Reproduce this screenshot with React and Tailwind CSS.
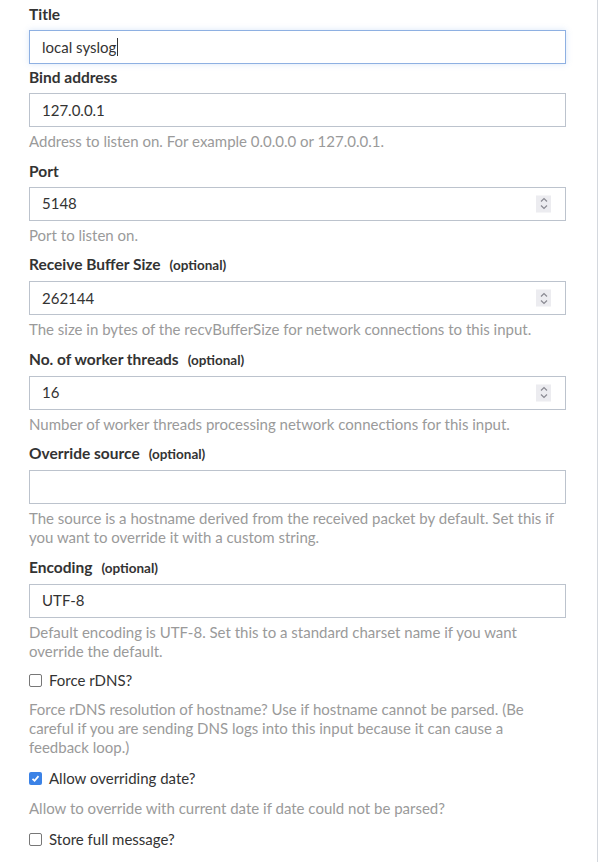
import React from 'react';

const FONT = { fontFamily: 'Lato, "Open Sans", sans-serif' };

function Label({ children, optional }) {
  return (
    <label className="block text-[15.5px] font-bold text-[#333] leading-[20px] mb-[6px]">
      {children}
      {optional && <span className="ml-[9px] text-[13.5px] font-bold">(optional)</span>}
    </label>
  );
}

function Help({ children }) {
  return <p className="mt-[5px] mb-[9.5px] text-[15px] leading-[19px] text-[#9a9a9a]">{children}</p>;
}

function Spinner() {
  return (
    <span className="absolute right-[15px] top-1/2 -translate-y-1/2 w-[15px] h-[17px] bg-[#ececf0] flex items-center justify-center">
      <svg width="10" height="14" viewBox="0 0 10 14" fill="none" stroke="#8a8a92" strokeWidth="1.2">
        <path d="M2 5 L5 2 L8 5" />
        <path d="M2 9 L5 12 L8 9" />
      </svg>
    </span>
  );
}

function Field({ label, optional, value, help, number, focused }) {
  return (
    <div className="mb-[3px]">
      <Label optional={optional}>{label}</Label>
      <div className="relative">
        <div
          className={
            'h-[34px] w-full border bg-white px-[12px] flex items-center text-[15px] text-[#333] ' +
            (focused ? 'border-[#8eb0e2] shadow-[0_0_6px_rgba(102,155,230,0.25)]' : 'border-[#bcc3cd]')
          }
        >
          {value}
          {focused && <span className="inline-block w-px h-[18px] bg-[#333] ml-px" />}
        </div>
        {number && <Spinner />}
      </div>
      {help && <Help>{help}</Help>}
    </div>
  );
}

function Check({ label, checked, help }) {
  return (
    <div className="mb-[11.5px]">
      <div className="flex items-center gap-[7px] h-[20px]">
        {checked ? (
          <span className="w-[13px] h-[13px] rounded-[2px] bg-[#3b82e6] flex items-center justify-center">
            <svg width="9" height="9" viewBox="0 0 9 9" fill="none" stroke="#fff" strokeWidth="1.8">
              <path d="M1.5 4.8 L3.6 6.8 L7.5 2.2" />
            </svg>
          </span>
        ) : (
          <span className="w-[13px] h-[13px] rounded-[2px] border border-[#777] bg-white" />
        )}
        <span className="text-[15px] text-[#333]">{label}</span>
      </div>
      {help && <p className="mt-[10px] text-[15px] leading-[19px] text-[#9a9a9a]">{help}</p>}
    </div>
  );
}

export default function App() {
  return (
    <div className="w-[598px] h-[862px] bg-white overflow-hidden" style={FONT}>
      <div className="w-[598px] border-r border-[#d4d8de] h-full pl-[29px] pr-[31px] pt-[4px]">
        <Field label="Title" value="local syslog" focused />
        <Field
          label="Bind address"
          value="127.0.0.1"
          help="Address to listen on. For example 0.0.0.0 or 127.0.0.1."
        />
        <Field label="Port" value="5148" number help="Port to listen on." />
        <Field
          label="Receive Buffer Size"
          optional
          value="262144"
          number
          help="The size in bytes of the recvBufferSize for network connections to this input."
        />
        <Field
          label="No. of worker threads"
          optional
          value="16"
          number
          help="Number of worker threads processing network connections for this input."
        />
        <Field
          label="Override source"
          optional
          value=""
          help="The source is a hostname derived from the received packet by default. Set this if you want to override it with a custom string."
        />
        <Field
          label="Encoding"
          optional
          value="UTF-8"
          help="Default encoding is UTF-8. Set this to a standard charset name if you want override the default."
        />
        <div className="mt-[2px]">
          <Check
            label="Force rDNS?"
            help="Force rDNS resolution of hostname? Use if hostname cannot be parsed. (Be careful if you are sending DNS logs into this input because it can cause a feedback loop.)"
          />
          <Check
            label="Allow overriding date?"
            checked
            help="Allow to override with current date if date could not be parsed?"
          />
          <Check label="Store full message?" />
        </div>
      </div>
    </div>
  );
}
